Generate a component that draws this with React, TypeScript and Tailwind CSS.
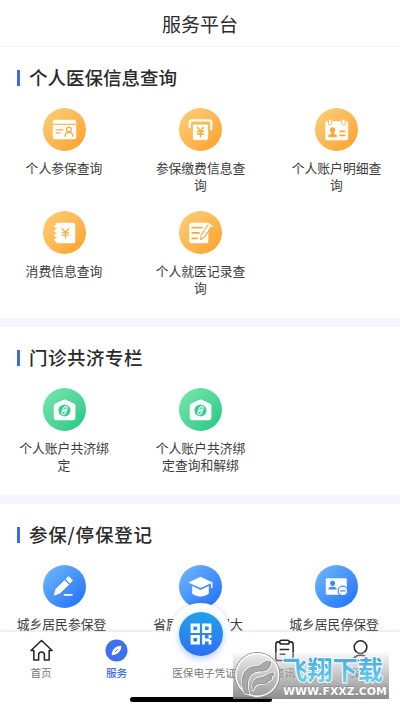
import type { ReactNode } from 'react'

type Item = { lines: string[]; icon: ReactNode }

const orange = 'bg-linear-to-br from-[#fbd07a] to-[#fda01c]'
const green = 'bg-linear-to-br from-[#76e8ae] to-[#17c683]'
const blue = 'bg-linear-to-br from-[#72b8fd] to-[#1c6cfb]'

const Glyph = ({ children }: { children: ReactNode }) => (
  <svg viewBox="0 0 44 44" className="block h-full w-full" fill="none" strokeLinecap="round" strokeLinejoin="round">
    {children}
  </svg>
)

const HouseLink = () => (
  <Glyph>
    <path d="M22 11.5 32 16.2a2 2 0 0 1 1.2 1.8v12.5a2.5 2.5 0 0 1-2.5 2.5H13.5a2.5 2.5 0 0 1-2.5-2.5V18a2 2 0 0 1 1.2-1.8z" fill="#fff" />
    <circle cx="22" cy="23" r="6.2" fill="#37ce90" />
    <g stroke="#fff" strokeWidth="1.1" transform="rotate(-50 22 23)">
      <rect x="17.6" y="22.2" width="5.8" height="3" rx="1.5" />
      <rect x="20.6" y="20.8" width="5.8" height="3" rx="1.5" />
    </g>
  </Glyph>
)

const queryItems: Item[] = [
  {
    lines: ['个人参保查询'],
    icon: (
      <Glyph>
        <path d="M10 16v-1.5a2.5 2.5 0 0 1 2.5-2.5h19a2.5 2.5 0 0 1 2.5 2.5V16z" fill="#fff" />
        <path d="M10 17.5h24V30a2 2 0 0 1-2 2H12a2 2 0 0 1-2-2z" fill="#fff" />
        <g stroke="#fca93a" strokeWidth="1.3">
          <path d="M13.5 22.5h7M13.5 25.5h4" />
          <circle cx="26.5" cy="22" r="2.4" />
          <path d="M22.5 29c.3-3 1.8-4.4 4-4.4s3.8 1.4 4.1 4.4" />
        </g>
      </Glyph>
    ),
  },
  {
    lines: ['参保缴费信息查', '询'],
    icon: (
      <Glyph>
        <path d="M11 20v-5.5a1.800 1.800 0 0 1 1.800-1.800h18.400a1.800 1.800 0 0 1 1.800 1.800V22" stroke="#fff" strokeWidth="2.200" />
        <path d="M14 16.500h16v15a1.500 1.500 0 0 1-1.500 1.500h-13a1.500 1.500 0 0 1-1.500-1.500z" fill="#fff" stroke="#fcb44a" strokeWidth="0.700" />
        <path d="m19 20 3 3.500 3-3.500M22 23.500v6M18.800 24h6.400M18.800 26.700h6.400" stroke="#fca93a" strokeWidth="1.500" />
      </Glyph>
    ),
  },
  {
    lines: ['个人账户明细查', '询'],
    icon: (
      <Glyph>
        <rect x="10.500" y="13.500" width="23.500" height="19.500" rx="1.500" fill="#fff" />
        <rect x="13.700" y="11" width="3.400" height="6.500" rx="1.700" fill="#fff" stroke="#fcb84d" strokeWidth="1" />
        <rect x="27.400" y="11" width="3.400" height="6.500" rx="1.700" fill="#fff" stroke="#fcb84d" strokeWidth="1" />
        <circle cx="18" cy="22.500" r="2.700" fill="#fca93a" />
        <path d="M16.700 24h2.600v2l3 1.500V30h-8.600v-2.500l3-1.500z" fill="#fca93a" />
        <path d="M25 24h6M25 28h6" stroke="#fca93a" strokeWidth="1.800" strokeLinecap="butt" />
      </Glyph>
    ),
  },
  {
    lines: ['消费信息查询'],
    icon: (
      <Glyph>
        <rect x="13" y="12" width="20" height="21" rx="2" fill="#fff" />
        <path d="M13 16h1M13 20.500h1M13 25h1M13 29.500h1" stroke="#fff" strokeWidth="3" />
        <path d="M11.500 18.200h2M11.500 22.700h2M11.500 27.200h2" stroke="#fcb44a" strokeWidth="1" />
        <path d="m19.500 18 3.500 4 3.500-4M23 22v5.500M19.300 22.300h7.400M19.300 24.800h7.400" stroke="#fca93a" strokeWidth="1.200" />
      </Glyph>
    ),
  },
  {
    lines: ['个人就医记录查', '询'],
    icon: (
      <Glyph>
        <rect x="10.500" y="12" width="19.500" height="21" rx="1.800" fill="#fff" />
        <path d="M13.500 17h10M13.500 22.500h7M13.500 28h5" stroke="#fca93a" strokeWidth="1.800" />
        <path d="m22.500 25 7.500-11.200 3.300 2.200-7.600 11.200-3.600 1.900z" fill="#fff" stroke="#fca93a" strokeWidth="1.100" />
        <path d="m30.300 13.300 3.500 2.400" stroke="#fff" strokeWidth="1.700" />
      </Glyph>
    ),
  },
]

const clinicItems: Item[] = [
  { lines: ['个人账户共济绑', '定'], icon: <HouseLink /> },
  { lines: ['个人账户共济绑', '定查询和解绑'], icon: <HouseLink /> },
]

const registerItems: Item[] = [
  {
    lines: ['城乡居民参保登'],
    icon: (
      <Glyph>
        <path d="m13.500 24.500 8.500-8.500 4.200 4.200-8.700 8.300-5.500 2.200z" fill="#fff" stroke="#fff" />
        <path d="m23.800 14.200 2.500-2.300 3.900 3.800-2.400 2.600z" fill="#fff" stroke="#fff" />
        <path d="M22 30.500h7.500" stroke="#fff" strokeWidth="1.800" />
      </Glyph>
    ),
  },
  {
    lines: ['省属居民参保大'],
    icon: (
      <Glyph>
        <path d="m22 12 12.500 5.800L22 23.500 9.500 17.800z" fill="#fff" />
        <path d="M13.500 21.500 22 25.500l8.500-4v8c-4.500 3.500-12.500 3.500-17 0z" fill="#fff" />
        <path d="M33.500 18v5" stroke="#fff" strokeWidth="1.500" />
      </Glyph>
    ),
  },
  {
    lines: ['城乡居民停保登'],
    icon: (
      <Glyph>
        <rect x="11" y="13.500" width="21.500" height="17" rx="1.300" fill="#fff" />
        <circle cx="18" cy="18.800" r="2.600" fill="#378bfc" />
        <path d="M13.700 25c0-2 1.500-2.800 4.300-2.800s4.300.8 4.300 2.800z" fill="#378bfc" />
        <circle cx="28.500" cy="26.500" r="4.800" fill="#fff" stroke="#378bfc" strokeWidth="1.200" />
        <path d="M26.300 26.500h4.400" stroke="#378bfc" strokeWidth="1.300" />
      </Glyph>
    ),
  },
]

type SectionProps = { title: string; tone: string; items: Item[]; titleClass?: string; labelClass?: string }

function Section({ title, tone, items, titleClass = '', labelClass = 'mt-2' }: SectionProps) {
  return (
    <section>
      <div className="flex h-[26px] items-center gap-[9px] pl-[17px]">
        <span className="mt-px h-4 w-[3px] bg-[#3d6be0]" />
        <h2 className={`text-[18.500px] leading-[24px] font-medium text-[#2a2a2a] ${titleClass}`}>{title}</h2>
      </div>
      <div className="mt-[18px] grid grid-cols-[128px_145px_127px]">
        {items.map((item, i) => (
          <div key={i} className="flex h-[103px] flex-col items-center">
            <div className={`size-[43px] shrink-0 rounded-full ${tone}`}>{item.icon}</div>
            <p className={`text-center text-[12.800px] leading-[17px] whitespace-nowrap text-[#3c3c3c] ${labelClass}`}>
              {item.lines.map((line) => (
                <span key={line} className="block">{line}</span>
              ))}
            </p>
          </div>
        ))}
      </div>
    </section>
  )
}

function TabBar() {
  return (
    <nav className="absolute inset-x-0 bottom-0 h-[79px] bg-white text-[10.600px] leading-4 text-[#777] shadow-[0_-1px_4px_rgba(0,0,0,0.12)]">
      <div className="absolute -top-[29px] left-[170px] size-[61px] rounded-full bg-white shadow-[0_-1px_4px_rgba(0,0,0,0.12)]" />
      <div className="relative flex h-full bg-white">
        <div className="flex w-[82px] shrink-0 flex-col items-center pt-[7px]">
          <svg viewBox="0 0 24 24" className="size-[23px]" fill="none" stroke="#252525" strokeWidth="1.600" strokeLinejoin="round">
            <path d="M1 12 12 1.500 23 12h-3v10h-5v-5.500a3 3 0 0 0-6 0V22H4V12z" />
          </svg>
          <span className="mt-[3px]">首页</span>
        </div>
        <div className="flex w-[69px] shrink-0 flex-col items-center pt-[7px] text-[#3c6de8]">
          <svg viewBox="0 0 24 24" className="size-[23px]">
            <circle cx="12" cy="12" r="11.500" fill="#3f70ee" />
            <path d="M17 7c0 5.500-3.500 9.500-10 10C7 11 11 7 17 7z" fill="#fff" />
            <path d="m10.500 13.500 3-3" stroke="#3f70ee" strokeWidth="1" />
          </svg>
          <span className="mt-[3px] font-medium">服务</span>
        </div>
        <div className="flex w-[106px] shrink-0 justify-center pt-[33px]">
          <span>医保电子凭证</span>
        </div>
        <div className="flex w-[55px] shrink-0 flex-col items-center pt-[7px]">
          <svg viewBox="0 0 24 24" className="size-[23px]" fill="none" stroke="#252525" strokeWidth="1.600">
            <rect x="3" y="3" width="18" height="19.500" rx="2.500" />
            <rect x="7" y="1.300" width="10" height="4" rx="2" fill="#fff" />
            <path d="M7 11h10M7 16h6" />
          </svg>
          <span className="mt-[3px]">资讯</span>
        </div>
        <div className="flex w-[96px] shrink-0 flex-col items-center pt-[7px]">
          <svg viewBox="0 0 24 24" className="size-[23px]" fill="none" stroke="#252525" strokeWidth="1.600">
            <circle cx="12" cy="8.500" r="6.600" />
            <path d="M4 22.500c1-4 4-5.500 8-5.500s7 1.500 8 5.500z" />
          </svg>
          <span className="mt-[3px]">我的</span>
        </div>
      </div>
      <div className="absolute -top-[6px] left-[172px] size-[57px] -translate-y-[21px] rounded-full bg-white" />
      <div className="absolute -top-[20px] left-[179px] flex size-11 items-center justify-center rounded-full bg-linear-to-b from-[#20a1e8] to-[#316df4] shadow-[0_3px_7px_rgba(50,120,245,0.35)]">
        <svg viewBox="0 0 22 22" className="size-[22px]" fill="none" stroke="#fff" strokeWidth="2.800">
          <path d="M2 2h6.500v6.500H2zM13.500 2H20v6.500h-6.500zM2 13.500h6.500V20H2zM13.500 12.100v9.300M13.500 17h6.500M20 12.100v3M20 17v4.400" />
        </svg>
      </div>
      <div className="absolute bottom-[9px] left-[130px] h-[5px] w-[142px] rounded-full bg-black" />
    </nav>
  )
}

function SiteMark() {
  return (
    <div className="absolute top-[652px] left-[233px] h-[47px] w-[156px] bg-linear-to-b from-[#f4f4f4]/30 to-[#808080]/90">
      <svg viewBox="0 0 156 47" className="block h-full w-full overflow-visible">
        <defs>
          <linearGradient id="disc" x1="0" y1="0" x2="0" y2="1">
            <stop offset="0" stopColor="#ededed" />
            <stop offset="1" stopColor="#9b9b9b" />
          </linearGradient>
          <linearGradient id="word" x1="0" y1="0" x2="0" y2="1">
            <stop offset="0" stopColor="#3da3dc" />
            <stop offset="1" stopColor="#6fd3f3" />
          </linearGradient>
        </defs>
        <circle cx="24.300" cy="23" r="22.500" fill="url(#disc)" stroke="#8b8b8b" strokeWidth="1" />
        <circle cx="24.300" cy="23" r="21.300" fill="none" stroke="#fff" strokeWidth="1.400" />
        <g fill="#a9a9a9" stroke="#fff" strokeWidth="2.400" paintOrder="stroke" strokeLinejoin="round">
          <path d="M12 41C7 31 9 21 15 17c5-4 10-1 14-5 3-3 6-3 9-2-1 6-4 9-9 9-7 0-11 2-13 7-2 4-2 9 0 16z" />
          <path d="M20 38c-1-7 0-11 6-12 6 0 8-5 15-5-1 3-2 4-4 4l2 1c-1 3-3 3-5 3l1 1c-3 3-7 1-10 2-3 1-4 3-5 6z" />
        </g>
        <g fill="none" stroke="#777" strokeWidth="0.700" strokeLinejoin="round">
          <path d="M12 41C7 31 9 21 15 17c5-4 10-1 14-5 3-3 6-3 9-2-1 6-4 9-9 9-7 0-11 2-13 7-2 4-2 9 0 16z" />
          <path d="M20 38c-1-7 0-11 6-12 6 0 8-5 15-5-1 3-2 4-4 4l2 1c-1 3-3 3-5 3l1 1c-3 3-7 1-10 2-3 1-4 3-5 6z" />
        </g>
        <text x="49" y="28" textLength="101" lengthAdjust="spacingAndGlyphs" fontSize="26" fontWeight="700" fill="url(#word)" stroke="#fff" strokeWidth="2" paintOrder="stroke" strokeLinejoin="round">飞翔下载</text>
        <text x="50" y="43" textLength="104" lengthAdjust="spacingAndGlyphs" fontFamily="DejaVu Sans, sans-serif" fontSize="10.500" fontWeight="700" fill="#fff" stroke="#808080" strokeWidth="0.800" paintOrder="stroke">WWW.FXXZ.COM</text>
      </svg>
    </div>
  )
}

export default function App() {
  return (
    <div className="relative h-[711px] w-[400px] overflow-hidden bg-white font-['Noto_Sans_CJK_SC',sans-serif]">
      <header className="flex h-[47px] items-center justify-center border-b border-[#f4f4f4] pt-0.5 text-[19px] text-[#2b2b2b]">
        服务平台
      </header>
      <main>
        <div className="h-[271px] pt-[17px]">
          <Section title="个人医保信息查询" tone={orange} items={queryItems} />
        </div>
        <div className="h-[9px] bg-[#f4f6fb]" />
        <div className="h-[168px] pt-[17px]">
          <Section title="门诊共济专栏" tone={green} items={clinicItems} titleClass="tracking-[0.5px]" />
        </div>
        <div className="h-[9px] bg-[#f4f6fb]" />
        <div className="pt-[17px]">
          <Section title="参保/停保登记" tone={blue} items={registerItems} titleClass="tracking-[0.8px]" labelClass="mt-[7px] pr-[5px]" />
        </div>
      </main>
      <TabBar />
      <SiteMark />
    </div>
  )
}
